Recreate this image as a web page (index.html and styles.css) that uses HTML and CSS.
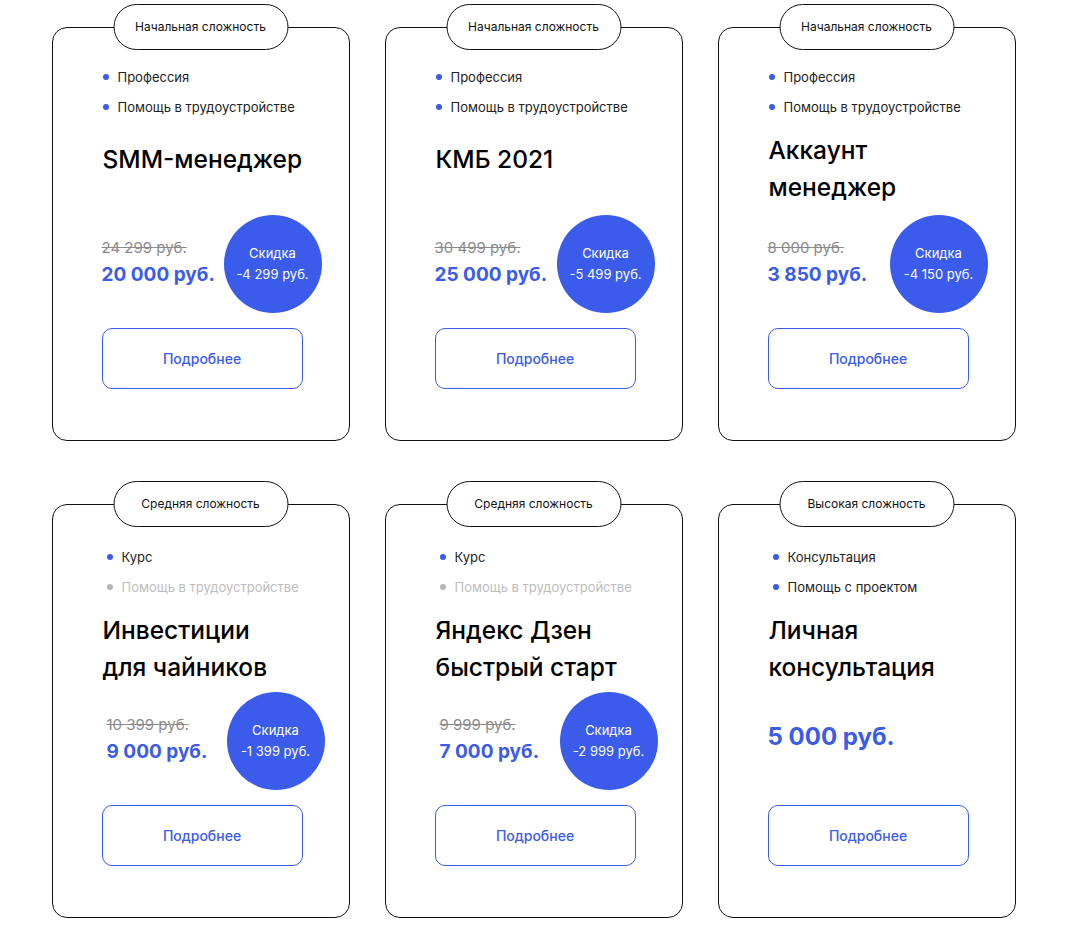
FILE: index.html
```html
<!DOCTYPE html>
<html lang="ru">
<head>
  <meta charset="UTF-8" />
  <title>Курсы</title>
  <link rel="stylesheet" href="styles.css">
</head>
<body>
  <div class="courses">

    <div class="card">
      <div class="badge">Начальная сложность</div>
      <ul class="features">
        <li>Профессия</li>
        <li>Помощь в трудоустройстве</li>
      </ul>
      <h3 class="title title--single">SMM-менеджер</h3>
      <div class="bottom">
        <div class="price-row">
          <div class="prices">
            <div class="old">24 299 руб.</div>
            <div class="new">20 000 руб.</div>
          </div>
          <div class="sale">Скидка<br>-4 299 руб.</div>
        </div>
        <button class="more">Подробнее</button>
      </div>
    </div>

    <div class="card">
      <div class="badge">Начальная сложность</div>
      <ul class="features">
        <li>Профессия</li>
        <li>Помощь в трудоустройстве</li>
      </ul>
      <h3 class="title title--single">КМБ 2021</h3>
      <div class="bottom">
        <div class="price-row">
          <div class="prices">
            <div class="old">30 499 руб.</div>
            <div class="new">25 000 руб.</div>
          </div>
          <div class="sale">Скидка<br>-5 499 руб.</div>
        </div>
        <button class="more">Подробнее</button>
      </div>
    </div>

    <div class="card">
      <div class="badge">Начальная сложность</div>
      <ul class="features">
        <li>Профессия</li>
        <li>Помощь в трудоустройстве</li>
      </ul>
      <h3 class="title">Аккаунт<br>менеджер</h3>
      <div class="bottom">
        <div class="price-row">
          <div class="prices">
            <div class="old">8 000 руб.</div>
            <div class="new">3 850 руб.</div>
          </div>
          <div class="sale">Скидка<br>-4 150 руб.</div>
        </div>
        <button class="more">Подробнее</button>
      </div>
    </div>

    <div class="card card--low">
      <div class="badge">Средняя сложность</div>
      <ul class="features">
        <li>Курс</li>
        <li class="off">Помощь в трудоустройстве</li>
      </ul>
      <h3 class="title">Инвестиции<br>для чайников</h3>
      <div class="bottom">
        <div class="price-row price-row--shift">
          <div class="prices">
            <div class="old">10 399 руб.</div>
            <div class="new">9 000 руб.</div>
          </div>
          <div class="sale">Скидка<br>-1 399 руб.</div>
        </div>
        <button class="more">Подробнее</button>
      </div>
    </div>

    <div class="card card--low">
      <div class="badge">Средняя сложность</div>
      <ul class="features">
        <li>Курс</li>
        <li class="off">Помощь в трудоустройстве</li>
      </ul>
      <h3 class="title">Яндекс Дзен<br>быстрый старт</h3>
      <div class="bottom">
        <div class="price-row price-row--shift">
          <div class="prices">
            <div class="old">9 999 руб.</div>
            <div class="new">7 000 руб.</div>
          </div>
          <div class="sale">Скидка<br>-2 999 руб.</div>
        </div>
        <button class="more">Подробнее</button>
      </div>
    </div>

    <div class="card card--low">
      <div class="badge">Высокая сложность</div>
      <ul class="features">
        <li>Консультация</li>
        <li>Помощь с проектом</li>
      </ul>
      <h3 class="title">Личная<br>консультация</h3>
      <div class="bottom">
        <div class="price-row">
          <div class="prices">
            <div class="new new--big">5 000 руб.</div>
          </div>
        </div>
        <button class="more">Подробнее</button>
      </div>
    </div>

  </div>
</body>
</html>
```

FILE: styles.css
```css
body {
  margin: 0;
  background: #fff;
  font-family: 'Inter', 'Noto Sans', sans-serif;
  color: #111;
}
.courses {
  display: grid;
  grid-template-columns: repeat(3, 298px);
  column-gap: 35px;
  row-gap: 63px;
  justify-content: center;
  padding-top: 27px;
}
.card {
  position: relative;
  box-sizing: border-box;
  height: 414px;
  border: 1px solid #111;
  border-radius: 15px;
  padding: 34px 27px 51px 49px;
  display: flex;
  flex-direction: column;
}
.card--low {
  padding-top: 37px;
}
.badge {
  position: absolute;
  top: -24px;
  left: 50%;
  transform: translateX(-50%);
  box-sizing: border-box;
  width: 175px;
  height: 46px;
  border: 1px solid #111;
  border-radius: 23px;
  background: #fff;
  font-size: 12px;
  line-height: 44px;
  text-align: center;
  white-space: nowrap;
}
.features {
  list-style: none;
  margin: 0;
  padding: 0 0 0 1px;
}
.card--low .features {
  padding-left: 5px;
}
.features li {
  font-size: 13px;
  line-height: 30px;
  color: #222;
  display: flex;
  align-items: center;
  white-space: nowrap;
}
.features li::before {
  content: "";
  width: 6px;
  height: 6px;
  border-radius: 50%;
  background: #3b5bea;
  margin-right: 9px;
  flex: none;
}
.features li.off {
  color: #bdbdbd;
}
.features li.off::before {
  background: #b5b5b5;
}
.title {
  margin: 10px 0 0 1px;
  font-size: 24.5px;
  font-weight: 500;
  line-height: 37px;
  color: #000;
}
.title--single {
  margin-top: 19px;
}
.bottom {
  margin-top: auto;
}
.price-row {
  height: 98px;
  display: flex;
  align-items: center;
  justify-content: space-between;
}
.price-row--shift {
  padding-left: 5px;
  margin-right: -3px;
}
.prices {
  padding-bottom: 3px;
}
.old {
  font-size: 15px;
  line-height: 24px;
  color: #8a8a8a;
  text-decoration: line-through;
}
.new {
  font-size: 19px;
  line-height: 30px;
  font-weight: 700;
  color: #3b5bea;
}
.new--big {
  font-size: 24px;
  padding-bottom: 6px;
}
.sale {
  width: 98px;
  height: 98px;
  border-radius: 50%;
  background: #3b5bea;
  color: #fff;
  font-size: 13px;
  line-height: 21px;
  display: flex;
  flex-direction: column;
  align-items: center;
  justify-content: center;
  text-align: center;
}
.more {
  display: block;
  margin-top: 15px;
  width: 201px;
  height: 61px;
  border: 1px solid #3b5bea;
  border-radius: 10px;
  background: #fff;
  color: #3b5bea;
  font-family: inherit;
  font-size: 14px;
  font-weight: 500;
  cursor: pointer;
}
```
